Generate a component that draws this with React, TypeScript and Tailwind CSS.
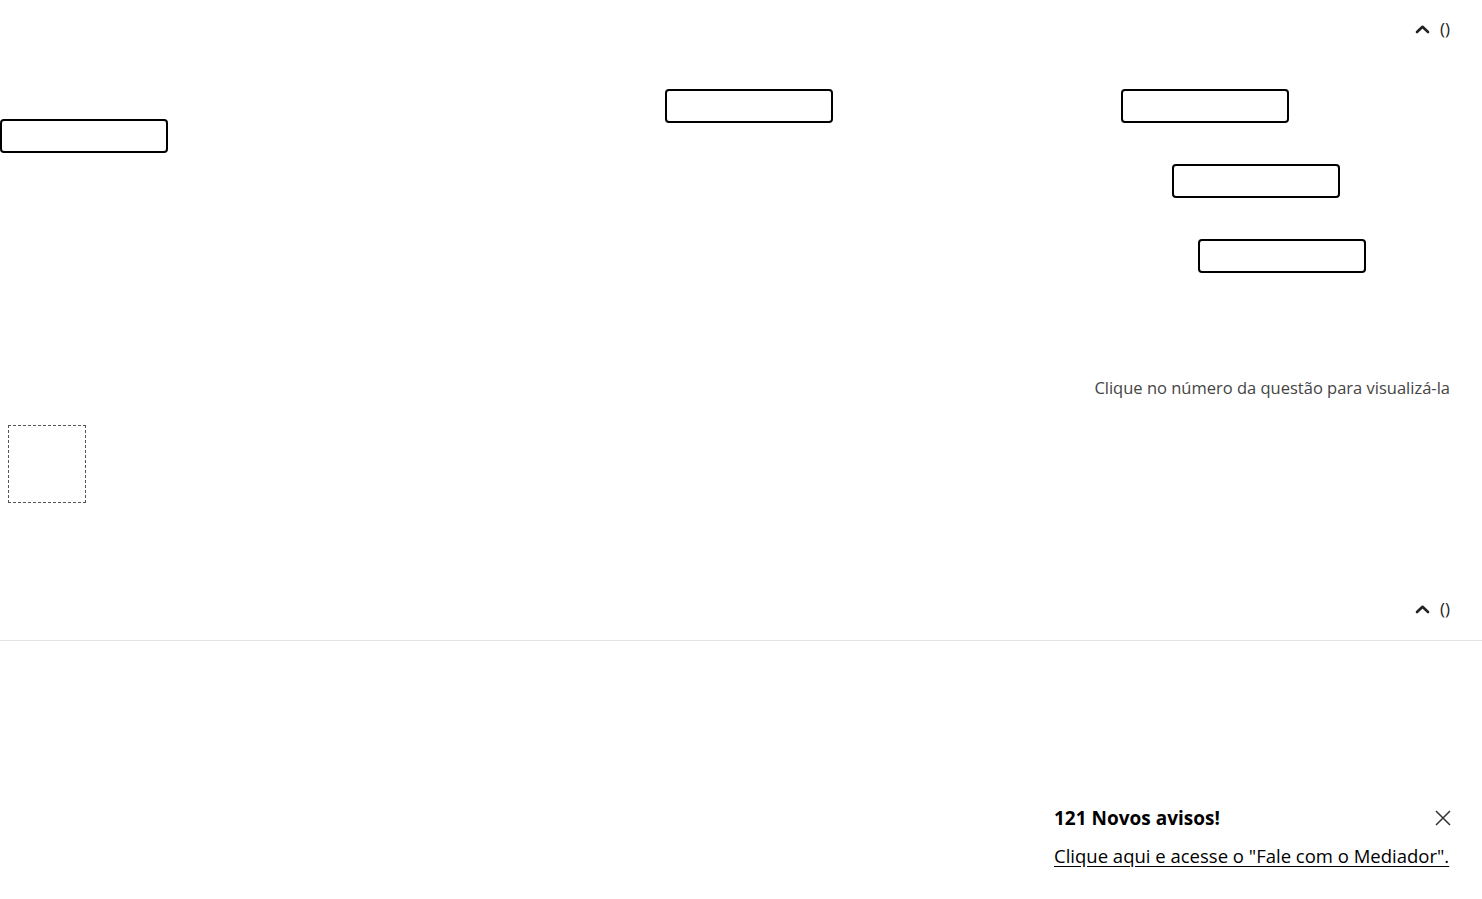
import React from 'react';

const Chevron = () => (
  <svg width="15" height="10" viewBox="0 0 15 10" className="text-[#222]">
    <path d="M2 8 L7.5 2.8 L13 8" fill="none" stroke="currentColor" strokeWidth="2.6" strokeLinecap="round" strokeLinejoin="round" />
  </svg>
);

const Toggle = () => (
  <div className="flex items-center gap-[10px] text-[17px] text-[#222]">
    <Chevron />
    <span>()</span>
  </div>
);

const Slot = ({ className = '' }: { className?: string }) => (
  <div className={`w-[168px] h-[34px] shrink-0 border-2 border-black rounded-[4px] ${className}`} />
);

export default function App() {
  return (
    <div className="min-h-screen bg-white text-[#222] font-['Segoe_UI','Open_Sans',sans-serif]">
      <div className="h-[58px] flex items-center justify-end pr-[32px]">
        <Toggle />
      </div>

      <div className="pt-[31px] flex items-start">
        <Slot className="mt-[30px]" />
        <Slot className="ml-[497px]" />
        <div className="ml-[288px] flex flex-col">
          <Slot />
          <Slot className="mt-[41px] ml-[51px]" />
          <Slot className="mt-[41px] ml-[77px]" />
        </div>
      </div>

      <div className="mt-[103px] pr-[32px] text-right text-[16.5px] leading-[24px] text-[#444]">
        Clique no número da questão para visualizá-la
      </div>

      <div className="mt-[25px] ml-[8px] w-[78px] h-[78px] border border-dashed border-[#555]" />

      <div className="mt-[74px] h-[64px] flex items-center justify-end pr-[32px] border-b border-[#e3e3e3]">
        <Toggle />
      </div>

      <div className="mt-[163px] flex justify-end pr-[31px]">
        <div className="w-[397px] flex flex-col gap-[10px]">
          <div className="flex items-center justify-between h-[28px]">
            <span className="text-[19px] font-bold text-black">121 Novos avisos!</span>
            <svg width="16" height="16" viewBox="0 0 16 16" className="text-[#333]">
              <path d="M1 1 L15 15 M15 1 L1 15" stroke="currentColor" strokeWidth="1.5" fill="none" />
            </svg>
          </div>
          <a href="#" className="whitespace-nowrap text-[18.5px] leading-[28px] text-black underline underline-offset-[3px]">
            Clique aqui e acesse o "Fale com o Mediador".
          </a>
        </div>
      </div>
    </div>
  );
}
